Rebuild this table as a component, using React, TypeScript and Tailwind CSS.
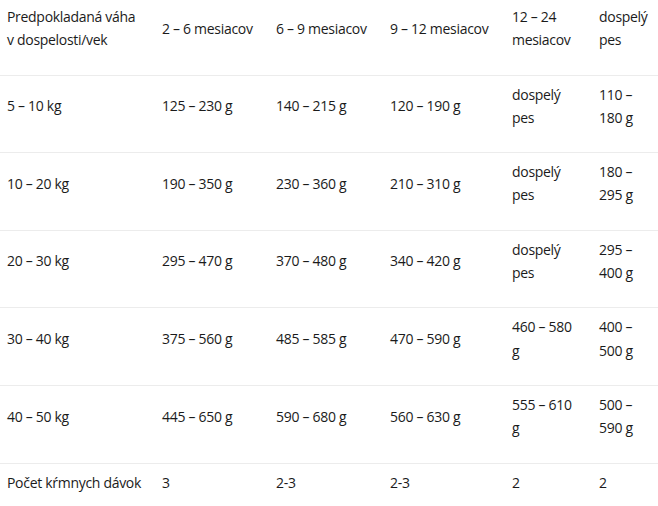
const HEAD = [
    ['Predpokladaná váha', 'v dospelosti/vek'],
    ['2 – 6 mesiacov'],
    ['6 – 9 mesiacov'],
    ['9 – 12 mesiacov'],
    ['12 – 24', 'mesiacov'],
    ['dospelý', 'pes'],
];

const ROWS: string[][][] = [
    [['5 – 10 kg'], ['125 – 230 g'], ['140 – 215 g'], ['120 – 190 g'], ['dospelý', 'pes'], ['110 –', '180 g']],
    [['10 – 20 kg'], ['190 – 350 g'], ['230 – 360 g'], ['210 – 310 g'], ['dospelý', 'pes'], ['180 –', '295 g']],
    [['20 – 30 kg'], ['295 – 470 g'], ['370 – 480 g'], ['340 – 420 g'], ['dospelý', 'pes'], ['295 –', '400 g']],
    [['30 – 40 kg'], ['375 – 560 g'], ['485 – 585 g'], ['470 – 590 g'], ['460 – 580', 'g'], ['400 –', '500 g']],
    [['40 – 50 kg'], ['445 – 650 g'], ['590 – 680 g'], ['560 – 630 g'], ['555 – 610', 'g'], ['500 –', '590 g']],
    [['Počet kŕmnych dávok'], ['3'], ['2-3'], ['2-3'], ['2'], ['2']],
];

const WIDTHS = ['w-[155px]', 'w-[114px]', 'w-[114px]', 'w-[122px]', 'w-[87px]', 'w-[66px]'];

function Cell({ lines }: { lines: string[] }) {
    return (
        <td className="align-middle pl-[7px] pr-[5px] pt-[7px] pb-[23px] whitespace-nowrap">
            {lines.map((l, i) => (
                <div key={i}>{l}</div>
            ))}
        </td>
    );
}

export default function App() {
    return (
        <div className="w-[658px] h-[506px] overflow-hidden bg-white text-[#1b1b1b] text-[14px] leading-[23.3px] font-['Open_Sans',sans-serif] tracking-[-0.3px]">
            <table className="w-[658px] table-fixed border-collapse -mt-[2px]">
                <colgroup>
                    {WIDTHS.map((w, i) => (
                        <col key={i} className={w} />
                    ))}
                </colgroup>
                <thead>
                    <tr>
                        {HEAD.map((h, i) => (
                            <Cell key={i} lines={h} />
                        ))}
                    </tr>
                </thead>
                <tbody>
                    {ROWS.map((r, i) => (
                        <tr key={i} className="border-t border-[#ececec]">
                            {r.map((c, j) => (
                                <Cell key={j} lines={c} />
                            ))}
                        </tr>
                    ))}
                </tbody>
            </table>
        </div>
    );
}
